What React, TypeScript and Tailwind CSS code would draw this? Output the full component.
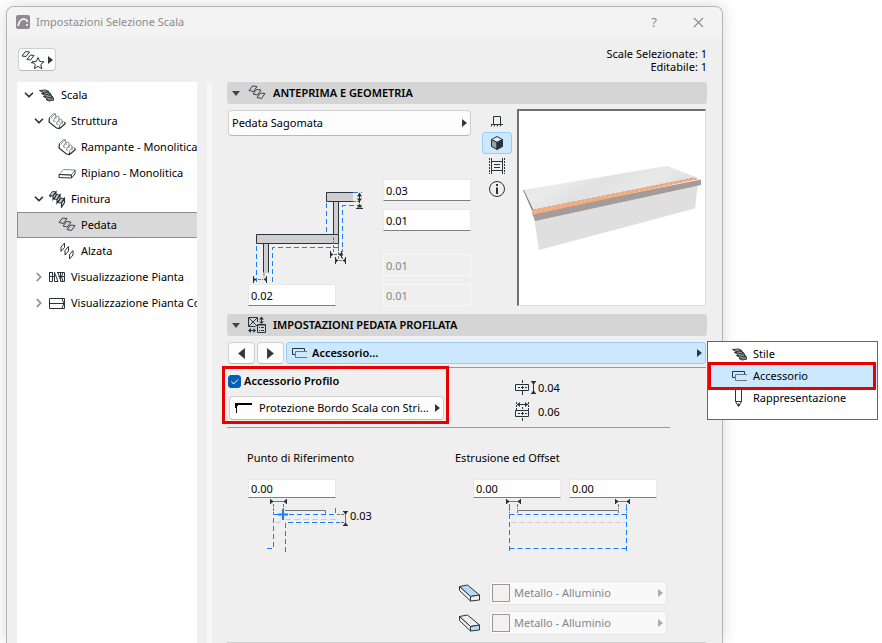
import type { ReactNode } from "react";
import { ChevronDown, ChevronRight, X } from "lucide-react";
import { clsx } from "clsx";

type IconProps = { children: ReactNode; w?: number; h?: number; className?: string };

function Icon({ children, w = 18, h = 18, className }: IconProps) {
  return (
    <svg
      width={w}
      height={h}
      viewBox={`0 0 ${w} ${h}`}
      fill="none"
      stroke="#27343b"
      className={clsx("shrink-0", className)}
      aria-hidden="true"
    >
      {children}
    </svg>
  );
}

const StairIcon = () => (
  <Icon>
    <path
      d="M1.500 4.500l6-.5 3.500 1.500-6 1zM3.500 7.500l7-1 2.500 1.500-6.500 1zM5.500 10.500l7-1 2.500 1.500-6.500 1zM8 13.500l6.500-1 1.500 1.500-5 1z"
      fill="#a5acae"
    />
    <path d="M5 6.500v2M10.500 5.500l1 2.500M6.500 9l.500 2.500M13 8l.500 3M8.500 12l.500 2M15 11l.500 2.500" />
  </Icon>
);

const StructureIcon = () => (
  <Icon>
    <path
      d="M1.500 5.500l4-4 2 .5M3 6.500c1-2 2-3.500 4.500-4.500l.5 5M5.500 9c.500-3 1.500-4 4-5l1.500 1v5M5.500 9l2 .5M8.500 12c.500-3 2-4.500 4-5l1.500 1v4.500M8.500 12l1.500.500M11.500 14.500c0-2.500 1.500-4.500 4-5l1.500 1"
      stroke="#848b8f"
    />
    <path d="M1.500 5.500L1 10l7.500 6 3 .5 5.500-4.500v-2M11.500 16.500v-2" strokeWidth="1.200" />
  </Icon>
);

const LandingIcon = () => (
  <Icon>
    <path d="M1 10.500L5.500 5.500l11.500.5-3.500 5z" stroke="#848b8f" />
    <path d="M1 10.500v3l12.500.500 3.500-4V6M1 10.500l12.500.5v3" />
  </Icon>
);

const FinishIcon = () => (
  <Icon>
    <path d="M4.500 1.500L8 2 5 6 1.500 5.500zM8.500 4.500L12 5 9 9.500 6 9zM13 8l3 .5-3 4.500-3-.5z" fill="#cfd2d3" />
    <path d="M8 2v3.500L5 9.500V6zM12 5v3.500l-3 4.500V9.500zM16.500 8.500v4l-3 4.500v-4zM1.500 5.500L3 7" strokeWidth="1.200" />
  </Icon>
);

const TreadIcon = () => (
  <Icon>
    <path
      d="M4.500 2L9 2.500 5.500 7.500 1 6.500zM8.500 5.500l4.500.5-3.500 5L5 10zM12.500 9l4.500.5-3.500 5L9 13.500z"
      fill="#cfd2d3"
      stroke="#36444b"
    />
  </Icon>
);

const RiserIcon = () => (
  <Icon>
    <path d="M6.500 1v4.500l-3.500 4V5zM10.500 4.500V9L7 13V8.500zM15 8.500V13l-3.500 4v-4.500z" />
  </Icon>
);

const PlanIcon = () => (
  <Icon>
    <path d="M1.500 4v9.500h3V4M1.500 8.500h5M1 4.500h3.500M6.500 4v9.500H10L6.500 4.500M9 4.500h7.500v9h-3.500l-3-9M12.500 4.500v9M10.500 8.500h6M15 4.500l-1.500 4 1.500 5" />
  </Icon>
);

const CeilingIcon = () => (
  <Icon>
    <path d="M1.500 4.500h15v10h-15zM1.500 9.500h15M14 5l2 4.500-2 4.500" />
  </Icon>
);

const AccessoryIcon = () => (
  <Icon w={16} h={12}>
    <path d="M15 4.500H3.500v6H15" stroke="#6c777c" />
    <path d="M3 7.500H.500v-6H12.500V4" />
  </Icon>
);

const PenIcon = () => (
  <Icon>
    <path d="M6.500 0v12.500l3 5 3-5V0M6.500 12.500h6M9 15h1v2z" />
  </Icon>
);

const ProfileIcon = () => (
  <Icon>
    <path d="M9.500 6V1.500h-9v9h7M1 2l8 8M9 2l-8 8M13.500 2v5M2 14.500h5" />
    <path d="M11 3.500l2.500-3 2.500 3zM11 5.500l2.500 2.500 2.500-2.500zM3 12v5L0 14.500zM5.500 12v5L8 14.500z" fill="#27343b" stroke="none" />
    <path d="M9.500 8.500h8v8h-8z" fill="#d5d5d5" />
    <path d="M9.500 9h8M11 11.500h1M13 11.500h3M11 14.500h1M13 14.500h3" />
  </Icon>
);

const Arrow = ({ left, className }: { left?: boolean; className?: string }) => (
  <svg width="5" height="8" viewBox="0 0 5 8" className={clsx("shrink-0 fill-[#30383c]", className)} aria-hidden="true">
    <path d={left ? "M5 0v8L0 4z" : "M0 0v8l5-4z"} />
  </svg>
);

const treeItems = [
  { label: "Scala", level: 0, icon: StairIcon, open: true },
  { label: "Struttura", level: 1, icon: StructureIcon, open: true },
  { label: "Rampante - Monolitica", level: 2, icon: StructureIcon },
  { label: "Ripiano - Monolitica", level: 2, icon: LandingIcon },
  { label: "Finitura", level: 1, icon: FinishIcon, open: true },
  { label: "Pedata", level: 2, icon: TreadIcon, selected: true },
  { label: "Alzata", level: 2, icon: RiserIcon },
  { label: "Visualizzazione Pianta", level: 1, icon: PlanIcon, open: false },
  { label: "Visualizzazione Pianta Controsoffitto", level: 1, icon: CeilingIcon, open: false },
];

const indent = ["pl-[6px]", "pl-[16px]", "pl-[26px]"];

function Tree() {
  return (
    <nav className="w-[180px] shrink-0 overflow-hidden bg-white" aria-label="Scala">
      {treeItems.map((item) => (
        <button
          key={item.label}
          className={clsx(
            "flex h-[26px] w-full items-center border whitespace-nowrap",
            indent[item.level],
            item.selected ? "border-[#8c8c8c] border-r-transparent bg-[#d9d9d9]" : "border-transparent"
          )}
        >
          <span className="mr-1 flex w-[10px] shrink-0 justify-center">
            {item.open === true && <ChevronDown size={14} strokeWidth={3} className="shrink-0 text-[#333]" />}
            {item.open === false && <ChevronRight size={14} strokeWidth={3} className="shrink-0 text-[#8a8a8a]" />}
          </span>
          <item.icon />
          <span className="ml-[5px]">{item.label}</span>
        </button>
      ))}
    </nav>
  );
}

function SectionHeader({ icon, title }: { icon: ReactNode; title: string }) {
  return (
    <h2>
      <button className="flex h-[22px] w-full items-center rounded-[3px] bg-[#d5d5d5] pl-[5px] font-semibold">
        <svg width="8" height="5" viewBox="0 0 8 5" className="mr-2 fill-[#444]" aria-hidden="true">
          <path d="M0 0h8L4 5z" />
        </svg>
        {icon}
        <span className="ml-[7px]">{title}</span>
      </button>
    </h2>
  );
}

function NumberField({ label, value, disabled, short }: { label: string; value: string; disabled?: boolean; short?: boolean }) {
  return (
    <input
      aria-label={label}
      defaultValue={value}
      disabled={disabled}
      className={clsx(
        "w-[88px] border px-[2px] outline-none",
        short ? "h-[19px]" : "h-[22px]",
        disabled
          ? "border-[#f8f8f8] bg-[#efefef] text-[#858585]"
          : "border-[#e8e8e8] border-b-[#7f7f7f] bg-white"
      )}
    />
  );
}

function StepDiagram() {
  return (
    <svg width="155" height="105" viewBox="228 180 155 105" fill="none" className="shrink-0" aria-hidden="true">
      <g fill="#cfcfd1" stroke="none">
        <path d="M326 192h27v10h-27zM333 202h6v33h-6zM256 234h83v10h-83zM263 244h6v29h-6z" />
      </g>
      <path
        d="M353 192.500h-26.500v9H353M333.500 202v32M338.500 202v32M256.500 234.500h82v9h-82zM263.500 244v28.500M268.500 244v28.500"
        stroke="#27343b"
      />
      <path
        d="M326.500 203v31M342.500 247V205.500H362M353 192.500h9M256.500 246v36M272.500 282v-34.500H342"
        stroke="#1c7cff"
        strokeDasharray="5 3"
      />
      <path d="M333.500 237v16M338.500 244v16M342.500 249v10M353 201.500h8M264 273v5M258 279.500h5M334 254.500h4M339 260.500h3" stroke="#747474" strokeDasharray="3 1" />
      <path d="M359.500 193v10M356 208.500h7M330.500 251v7M341.500 251v7M335.500 257v7M345.500 257v7M253.500 276v7M266.500 276v7" stroke="#27343b" />
      <path
        d="M357 196.500h5l-2.500-4zM357 198.500h5l-2.500 3.500zM357 207.500h5l-2.500-4zM330 252v5l3.500-2.500zM342 252v5l-3.500-2.500zM335 258v5l3.500-2.500zM346 258v5l-3.500-2.500zM253 277v5l3.500-2.500zM267 277v5l-3.500-2.500z"
        fill="#27343b"
      />
    </svg>
  );
}

function ReferenceDiagram() {
  return (
    <svg width="102" height="57" viewBox="248 498 102 57" fill="none" className="shrink-0" aria-hidden="true">
      <path d="M274 501.500h9M285 510.500h40.500v4M345.500 514v8" stroke="#747474" />
      <path d="M273.500 504v10M283.500 504v6M337 514.500h7M337 522.500h7" stroke="#747474" strokeDasharray="3 1" />
      <path d="M276 522.500h4v-5h5M285 519.500h51" stroke="#cecece" strokeDasharray="6 3" />
      <path d="M267 548.500h6.500v-34h62V508M285.500 552v-29.500H339" stroke="#1c7cff" strokeDasharray="5 3" />
      <path d="M283 509v11M278 514.500h10" stroke="#1c7cff" strokeWidth="2" />
      <path d="M270.500 499v5M286.500 499v5M343 511.500h5M343 525.500h5" stroke="#27343b" />
      <path d="M270 499v5l4-2.500zM287 499v5l-4-2.500zM343 511h5l-2.500 4zM343 526h5l-2.500-4z" fill="#27343b" />
    </svg>
  );
}

function OffsetDiagram() {
  return (
    <svg width="184" height="57" viewBox="473 498 184 57" fill="none" className="shrink-0" aria-hidden="true">
      <path d="M510 501.500h7M619 501.500h7M517.500 513v-2.500h101v2.500" stroke="#747474" />
      <path d="M509.500 504v9M517.500 504v5M618.500 504v5M626.500 504v9" stroke="#747474" strokeDasharray="3 1" />
      <path d="M511 522.500h114" stroke="#cecece" strokeDasharray="5 3" />
      <path d="M509.500 514.500h117M509.500 548.500h117M509.500 506v45M626.500 506v45" stroke="#1c7cff" strokeDasharray="5 3" />
      <path d="M506.500 499v5M520.500 499v5M615.500 499v5M629.500 499v5" stroke="#27343b" />
      <path d="M506 499v5l4-2.500zM521 499v5l-4-2.500zM615 499v5l4-2.500zM630 499v5l-4-2.500z" fill="#27343b" />
    </svg>
  );
}

function Preview() {
  return (
    <div className="h-[197px] w-[189px] shrink-0 border border-t-2 border-l-2 border-t-[#707070] border-r-[#dedede] border-b-[#dedede] border-l-[#707070] bg-white">
      <svg width="186" height="194" viewBox="519 111 186 194" role="img" aria-label="Anteprima pedata">
        <defs>
          <linearGradient id="marble" x1="0" y1="0" x2="1" y2="0.4">
            <stop offset="0" stopColor="#dfdfdf" />
            <stop offset="0.3" stopColor="#ebebeb" />
            <stop offset="0.5" stopColor="#e1e1e1" />
            <stop offset="0.75" stopColor="#e9e9e9" />
            <stop offset="1" stopColor="#dcdcdc" />
          </linearGradient>
        </defs>
        <path d="M534 218L698 182 695 208.500 539 250z" fill="#dfdfdf" />
        <path d="M523 190L667 166l31 12-165 33z" fill="url(#marble)" />
        <path d="M523 190l1 0 9 19 0 4z" fill="#8b8888" />
        <path d="M532 213L701 179.500V185L535 221z" fill="#a49b9b" />
        <path d="M532 210L694 177.500l5 1.500-166 35.500z" fill="#fbb07b" />
        <path d="M533 210L694 178" stroke="#b5aaa4" strokeDasharray="3 2" />
        <path d="M533 212.500L697 179" stroke="#e08f60" strokeDasharray="1 4" />
      </svg>
    </div>
  );
}

const viewModes = [
  {
    label: "Sezione",
    icon: (
      <Icon>
        <path d="M5.500 13V5.500h7V13M3 13.500h12M3 15.500l1-2M6 15.500l1-2M9 15.500l1-2M12 15.500l1-2" />
      </Icon>
    ),
  },
  {
    label: "3D",
    active: true,
    icon: (
      <Icon>
        <path d="M9 2.500l5.500 3L9 8.500l-5.500-3z" fill="#dceaf3" />
        <path d="M3.500 5.500l5.500 3v7l-5.500-3z" fill="#99a0a4" />
        <path d="M14.500 5.500L9 8.500v7l5.500-3z" fill="#27343b" />
      </Icon>
    ),
  },
  {
    label: "Filmato",
    icon: (
      <Icon>
        <path d="M1.500 1v16M16.500 1v16" strokeDasharray="2 1" />
        <path d="M3.500 1v16M14.500 1v16M3 4.500h12M3 13.500h12M6 7.500h6M6 10.500h6" />
      </Icon>
    ),
  },
  {
    label: "Informazioni",
    icon: (
      <Icon>
        <circle cx="9" cy="9" r="7.500" />
        <path d="M9 7.500V14M9 4v2" strokeWidth="2" />
      </Icon>
    ),
  },
];

const materials = [
  { label: "Superficie superiore", top: "#b5d8fb", end: "#efefef" },
  { label: "Superficie laterale", top: "#efefef", end: "#b5d8fb" },
];

function ProfileSize({ vertical, value }: { vertical?: boolean; value: string }) {
  return (
    <div className="flex h-6 items-center">
      <Icon w={23} h={20}>
        {vertical ? (
          <>
            <path d="M.500 6.500h13v6H.500zM3 9.500h2M6 9.500h3M10 9.500h2M7.500 2v3M7.500 8v3M7.500 13v4" />
            <path d="M16 3.500h5M16 15.500h5M18.500 5v9" />
            <path d="M16.500 4h4l-2 3zM16.500 15h4l-2-3z" fill="#27343b" stroke="none" />
          </>
        ) : (
          <>
            <path d="M.500 8.500h13v6H.500zM3 11.500h2M6 11.500h3M10 11.500h2M7.500 5v2M7.500 10v3M7.500 16v3M2 2.500h11" />
            <path d="M1.500 0v8M13.500 0v8" strokeDasharray="2 1" />
            <path d="M5 0v5L2 2.500zM10 0v5l3-2.500z" fill="#27343b" stroke="none" />
          </>
        )}
      </Icon>
      <span>{value}</span>
    </div>
  );
}

function PopupMenu() {
  return (
    <ul role="menu" className="absolute -top-px left-full z-10 ml-px h-[79px] w-[171px] border border-[#666] bg-white py-px">
      <li role="none">
        <button role="menuitem" className="flex h-[22px] w-full items-center pl-[23px]">
          <StairIcon />
          <span className="ml-1">Stile</span>
        </button>
      </li>
      <li role="none" className="relative">
        <button role="menuitem" className="flex h-[22px] w-full items-center bg-[#cce8ff] pl-[24px]">
          <AccessoryIcon />
          <span className="ml-[5px]">Accessorio</span>
        </button>
        <span className="pointer-events-none absolute -inset-y-[3px] left-0 right-px border-3 border-[#e90000]" />
      </li>
      <li role="none">
        <button role="menuitem" className="flex h-[22px] w-full items-center pl-[21px]">
          <PenIcon />
          <span className="ml-[6px]">Rappresentazione</span>
        </button>
      </li>
    </ul>
  );
}

const buttonStyle = "flex items-center rounded-[4px] border border-[#cfcfcf] border-b-[#b9b9b9] bg-[#fdfdfd]";

export default function App() {
  return (
    <div className="flex min-h-screen bg-white pt-[6px] pr-[159px] pl-[6px] font-['Noto_Sans','Segoe_UI',sans-serif] text-[11px] leading-4 text-black">
      <main className="flex min-w-0 flex-1 flex-col rounded-t-[8px] border border-b-0 border-[#b4b4b4] bg-[#efefef] shadow-[0_0_16px_rgba(0,0,0,0.16)]">
        <header className="flex h-[30px] items-center rounded-t-[7px] bg-[#f3f3f3] pr-[15px] pl-[9px] text-[#8b8b8b]">
          <svg width="14" height="14" viewBox="0 0 14 14" aria-hidden="true">
            <rect width="14" height="14" rx="2" fill="#918991" />
            <path d="M2 11c1-4 3-7 5.500-7S11 5 11.500 7" stroke="#fff" strokeWidth="1.500" fill="none" />
            <circle cx="11" cy="10" r="1" fill="#fff" />
          </svg>
          <h1 className="ml-[6px]">Impostazioni Selezione Scala</h1>
          <button className="mr-[33px] ml-auto text-[13px]" aria-label="Aiuto">
            ?
          </button>
          <button aria-label="Chiudi">
            <X size={17} strokeWidth={1.5} />
          </button>
        </header>

        <div className="flex h-[45px] items-center justify-between pr-[15px] pl-[11px]">
          <button className={clsx(buttonStyle, "h-[23px] w-[38px] pl-[2px]")} aria-label="Preferiti">
            <Icon w={24} h={20}>
              <path d="M4.500 1.500L8.500 2 5 6.500l-4-.5zM9.500 5l3.500.5-3.500 4.500-3.500-.5zM10 12.500l2 .5" />
              <path d="M17 7.500l1.800 4 4.200.3-3.200 2.700 1 4.200-3.800-2.300-3.700 2.300 1-4.200-3.300-2.700 4.300-.3z" fill="#fff" />
            </Icon>
            <Arrow className="ml-[3px]" />
          </button>
          <p className="text-right leading-[13px]">
            Scale Selezionate: 1<br />
            Editabile: 1
          </p>
        </div>

        <div className="flex flex-1 pr-[15px] pl-[10px]">
          <Tree />
          <div className="mr-[15px] ml-[10px] w-[5px] shrink-0 bg-[#f7f7f7]" />

          <div className="min-w-0 flex-1">
            <SectionHeader icon={<TreadIcon />} title="ANTEPRIMA E GEOMETRIA" />
            <div className="flex justify-between pt-[5px] pr-px pb-2 pl-px">
              <div className="mr-[11px] flex-1 pt-px">
                <button className={clsx(buttonStyle, "h-[26px] w-full justify-between pr-[3px] pl-[3px]")}>
                  Pedata Sagomata
                  <Arrow />
                </button>
                <div className="mt-[43px] flex justify-between">
                  <div className="pt-px">
                    <StepDiagram />
                    <div className="-mt-px pl-5">
                      <NumberField label="Sporgenza" value="0.02" />
                    </div>
                  </div>
                  <div className="flex flex-col gap-2">
                    <NumberField label="Spessore pedata" value="0.03" />
                    <NumberField label="Distanza pedata" value="0.01" />
                    <div className="mt-[15px] flex flex-col gap-2">
                      <NumberField label="Spessore alzata" value="0.01" disabled />
                      <NumberField label="Distanza alzata" value="0.01" disabled />
                    </div>
                  </div>
                </div>
              </div>
              <div className="mr-[5px] flex w-[30px] flex-col gap-px">
                {viewModes.map((mode) => (
                  <button
                    key={mode.label}
                    aria-label={mode.label}
                    className={clsx(
                      "flex h-[22px] items-center justify-center rounded-[3px] border",
                      mode.active ? "border-[#99cdf7] bg-[#cce8ff]" : "border-transparent"
                    )}
                  >
                    {mode.icon}
                  </button>
                ))}
              </div>
              <Preview />
            </div>

            <SectionHeader icon={<ProfileIcon />} title="IMPOSTAZIONI PEDATA PROFILATA" />
            <div className="relative mt-[6px] mr-px ml-px flex gap-[2px]">
              <button className={clsx(buttonStyle, "h-[22px] w-[27px] justify-center")} aria-label="Precedente">
                <Arrow left className="h-[11px] w-[7px]" />
              </button>
              <button className={clsx(buttonStyle, "h-[22px] w-[27px] justify-center")} aria-label="Successivo">
                <Arrow className="h-[11px] w-[7px]" />
              </button>
              <button className="flex h-[22px] flex-1 items-center rounded-[3px] border border-[#99cdf7] bg-[#cce8ff] pr-[3px] pl-[5px] font-semibold">
                <AccessoryIcon />
                <span className="ml-1">Accessorio...</span>
                <Arrow className="ml-auto" />
              </button>
              <PopupMenu />
            </div>

            <div className="mt-[3px] mr-px flex border-t border-[#999]">
              <div className="relative w-[217px] pb-[7px]">
                <label className="flex h-[26px] items-center pl-px font-semibold">
                  <span className="relative mr-[3px] flex">
                    <input
                      type="checkbox"
                      defaultChecked
                      className="peer size-[13px] appearance-none rounded-[3px] border border-[#005fb8] bg-white checked:bg-[#005fb8]"
                    />
                    <svg viewBox="0 0 13 13" className="pointer-events-none absolute inset-0 hidden fill-none stroke-white peer-checked:block" aria-hidden="true">
                      <path d="M3.500 6.500l2 2.500 4.500-4.500" />
                    </svg>
                  </span>
                  Accessorio Profilo
                </label>
                <button className={clsx(buttonStyle, "mt-[2px] ml-[2px] h-[24px] w-[215px] pr-[3px] pl-[5px]")}>
                  <svg width="17" height="11" viewBox="0 0 17 11" className="shrink-0" aria-hidden="true">
                    <path d="M0 0h17v2H3v1H2v7H1V5H0z" />
                  </svg>
                  <span className="ml-[7px] truncate">Protezione Bordo Scala con Stri...</span>
                  <Arrow className="ml-auto" />
                </button>
                <span className="pointer-events-none absolute -top-[2px] -right-[5px] bottom-[3px] -left-[5px] border-3 border-[#e90000]" />
              </div>
              <div className="ml-[71px] pt-2">
                <ProfileSize vertical value="0.04" />
                <ProfileSize value="0.06" />
              </div>
            </div>

            <div className="mr-[37px] border-t border-[#999]" />

            <div className="flex pt-[22px]">
              <section className="w-[228px] shrink-0 pl-5">
                <h3>Punto di Riferimento</h3>
                <div className="mt-[13px] flex flex-col pl-px">
                  <NumberField label="Punto di Riferimento" value="0.00" short />
                  <div className="flex">
                    <ReferenceDiagram />
                    <span className="pt-[10px]">0.03</span>
                  </div>
                </div>
              </section>
              <section>
                <h3>Estrusione ed Offset</h3>
                <div className="mt-[13px] pl-[18px]">
                  <div className="flex gap-2">
                    <NumberField label="Offset iniziale" value="0.00" short />
                    <NumberField label="Offset finale" value="0.00" short />
                  </div>
                  <OffsetDiagram />
                </div>
              </section>
            </div>

            <div className="mt-[27px] mr-px flex flex-col gap-2 border-b border-[#cfcfcf] pb-2 pl-[231px]">
              {materials.map((m) => (
                <div key={m.label} className="flex h-[22px] items-center gap-2">
                  <Icon w={23} h={18}>
                    <path d="M1.500 2.500l8-1.500 12 10-9 1.500z" fill={m.top} />
                    <path d="M1.500 2.500v4l11 10.500v-4.500z" fill="#efefef" />
                    <path d="M12.500 12.500l9-1.500v5l-9 1z" fill={m.end} />
                  </Icon>
                  <button
                    disabled
                    aria-label={m.label}
                    className="flex h-[24px] w-[178px] items-center rounded-[4px] border border-[#e6e6e6] bg-[#f9f9f9] pr-[3px] pl-[2px] text-[#858585]"
                  >
                    <span className="mr-1 size-[18px] border border-[#999] bg-[#f5f0f0]" />
                    Metallo - Alluminio
                    <Arrow className="ml-auto opacity-40" />
                  </button>
                </div>
              ))}
            </div>
          </div>
        </div>
      </main>
    </div>
  );
}
